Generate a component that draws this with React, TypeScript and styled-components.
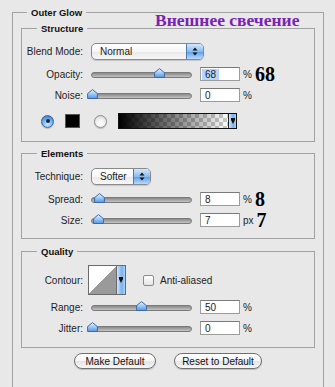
import React from 'react'
import styled, { createGlobalStyle } from 'styled-components'

const colors = {
  panel: '#e8e8e8',
  line: '#a2a2a2',
  text: '#1d1d1d',
  aquaTop: '#d3e8fd',
  aquaMid: '#8abcf0',
  aquaLow: '#5d9be4',
  aquaEdge: '#4f78ad'
};

const GlobalStyle = createGlobalStyle`
  html, body {
    margin: 0;
    padding: 0;
    background: ${colors.panel};
  }
  body {
    font-family: 'Liberation Sans', Arial, sans-serif;
    font-size: 10px;
    color: ${colors.text};
  }
  #root {
    width: 335px;
    height: 387px;
    overflow: hidden;
  }
`;

const Panel = styled.div`
  position: relative;
  padding: 12px 0 0 12px;
`;

const Group = styled.section<{ $outer?: boolean; $gap?: number }>`
  box-sizing: border-box;
  width: ${p => (p.$outer ? '312px' : 'auto')};
  height: ${p => (p.$outer ? '400px' : 'auto')};
  margin-top: ${p => p.$gap ?? 0}px;
  padding: ${p => (p.$outer ? '0 8px' : '0')};
  border: 1px solid ${colors.line};
  border-bottom: ${p => (p.$outer ? 'none' : `1px solid ${colors.line}`)};
`;

/* the caption sits on the box's top line, like a legend */
const Title = styled.div<{ $outer?: boolean }>`
  width: fit-content;
  margin: -7px 0 0 ${p => (p.$outer ? 6 : 15)}px;
  padding: 0 4px;
  height: 13px;
  line-height: 13px;
  font-weight: bold;
  font-size: 9.5px;
  color: #111;
  background: ${colors.panel};
`;

const Body = styled.div<{ $top: number; $bottom: number }>`
  display: flex;
  flex-direction: column;
  padding: ${p => p.$top}px 0 ${p => p.$bottom}px;
`;

const Row = styled.div<{ $h: number; $gap?: number }>`
  display: flex;
  align-items: center;
  height: ${p => p.$h}px;
  margin-top: ${p => p.$gap ?? 0}px;
`;

const Label = styled.span`
  flex-shrink: 0;
  width: 61px;
  text-align: right;
  white-space: nowrap;
`;

const Annotation = styled.span`
  position: absolute;
  left: 155px;
  top: 12px;
  font-family: 'Liberation Serif', 'Times New Roman', serif;
  font-weight: bold;
  font-size: 17.5px;
  line-height: 17px;
  color: #7a22b3;
`;

const BigValue = styled.span`
  margin-left: 3px;
  font-family: 'Liberation Serif', 'Times New Roman', serif;
  font-weight: bold;
  font-size: 20px;
  line-height: 14px;
  color: #000;
`;

/* popup menu */
const Select = styled.div<{ $w: number }>`
  box-sizing: border-box;
  display: flex;
  margin-left: 8px;
  width: ${p => p.$w}px;
  height: 17px;
  border: 1px solid #8a8a8a;
  border-radius: 5px;
  overflow: hidden;
  background: linear-gradient(#ffffff, #f6f6f6 50%, #e9e9e9 51%, #f7f7f7);
  box-shadow: 0 1px 1px rgba(0, 0, 0, 0.15);
`;

const SelectText = styled.span`
  flex: 1;
  padding-left: 8px;
  line-height: 15px;
`;

const SelectArrows = styled.span`
  display: flex;
  align-items: center;
  justify-content: center;
  width: 16px;
  border-left: 1px solid ${colors.aquaEdge};
  background: linear-gradient(${colors.aquaTop}, ${colors.aquaMid} 50%, ${colors.aquaLow} 51%, #b5dbff);
`;

/* slider */
const SliderBox = styled.div`
  display: flex;
  align-items: center;
  margin-left: 3px;
  width: 111px;
  height: 14px;
`;

const Track = styled.div`
  position: relative;
  flex: 1;
  margin: 2px 5px 0;
  height: 4px;
  border: 1px solid #7a7a7a;
  border-radius: 3px;
  background: linear-gradient(#8a8a8a, #a6a6a6 50%, #c4c4c4);
`;

const Thumb = styled.svg`
  position: absolute;
  bottom: -1px;
  width: 11px;
  height: 10px;
  margin-left: -5.5px;
`;

/* numeric field */
const Field = styled.div`
  box-sizing: border-box;
  margin-left: 3px;
  width: 40px;
  height: 14px;
  padding: 1px 1px 0;
  border: 1px solid #9c9c9c;
  border-top-color: #7a7a7a;
  background: #fff;
  line-height: 11px;
`;

const FieldValue = styled.span<{ $selected?: boolean }>`
  display: inline-block;
  padding: 0 3px;
  background: ${p => (p.$selected ? '#b5d5fd' : 'transparent')};
`;

const Unit = styled.span`
  margin-left: 3px;
`;

/* color row */
const Radio = styled.span<{ $on?: boolean; $gap: number }>`
  box-sizing: border-box;
  display: flex;
  align-items: center;
  justify-content: center;
  margin-left: ${p => p.$gap}px;
  width: 13px;
  height: 13px;
  border-radius: 50%;
  border: 1px solid ${p => (p.$on ? '#40679c' : '#8c8c8c')};
  background: ${p =>
    p.$on
      ? 'radial-gradient(circle at 50% 75%, #c9ebff, #7cb7f0 45%, #3f82d6 80%)'
      : 'radial-gradient(circle at 50% 70%, #ffffff, #f0f0f0 50%, #c9c9c9)'};
  box-shadow: 0 1px 1px rgba(0, 0, 0, 0.2);

  &::after {
    content: '';
    display: ${p => (p.$on ? 'block' : 'none')};
    width: 4px;
    height: 4px;
    border-radius: 50%;
    background: #1a2740;
  }
`;

const Swatch = styled.span`
  box-sizing: border-box;
  margin-left: 11px;
  width: 15px;
  height: 14px;
  background: #000;
  border: 1px solid #555;
`;

const GradientPicker = styled.div`
  box-sizing: border-box;
  display: flex;
  margin-left: 11px;
  width: 119px;
  height: 16px;
  border: 1px solid #111;
`;

const GradientFill = styled.div`
  flex: 1;
  background:
    linear-gradient(to right, #000, rgba(0, 0, 0, 0)),
    repeating-conic-gradient(#c9c9c9 0 25%, #ffffff 0 50%) 0 0 / 8px 8px;
`;

const DropArrow = styled.span`
  display: flex;
  align-items: center;
  justify-content: center;
  width: 7px;
  border-left: 1px solid #222;
  background: linear-gradient(to right, #cfe6fd, #79b1ee 60%, #a9d3fb);
`;

/* contour */
const Contour = styled.div`
  box-sizing: border-box;
  display: flex;
  margin-left: 5px;
  width: 38px;
  height: 30px;
  border: 1px solid #6a6a6a;
`;

const ContourCurve = styled.div`
  flex: 1;
  background: linear-gradient(to bottom right, #ffffff 50%, #9a9a9a 50%);
`;

const ContourArrow = styled(DropArrow)`
  width: 8px;
  border-left-color: #6a6a6a;
`;

const Checkbox = styled.span`
  box-sizing: border-box;
  margin-left: 17px;
  width: 11px;
  height: 11px;
  border: 1px solid #8a8a8a;
  border-radius: 2px;
  background: linear-gradient(#ffffff, #e4e4e4);
`;

const CheckLabel = styled.span`
  margin-left: 6px;
`;

/* bottom buttons */
const Buttons = styled.div`
  display: flex;
  justify-content: center;
  gap: 18px;
  margin-top: 5px;
`;

const Button = styled.button<{ $w: number }>`
  box-sizing: border-box;
  width: ${p => p.$w}px;
  height: 16px;
  padding: 0;
  border: 1px solid #707070;
  border-radius: 8px;
  background: linear-gradient(#ffffff, #f5f5f5 50%, #e4e4e4 51%, #f6f6f6);
  box-shadow: 0 1px 1px rgba(0, 0, 0, 0.18);
  font: inherit;
  color: #111;
`;

const UpDown = () => (
  <svg width="6" height="9" viewBox="0 0 6 9">
    <path d="M3 0.5 L5.5 3.5 H0.5 Z M3 8.5 L5.5 5.5 H0.5 Z" fill="#111" />
  </svg>
);

const Down = () => (
  <svg width="4" height="6" viewBox="0 0 4 6">
    <path d="M0 0 H4 V2 L2 6 L0 2 Z" fill="#111" />
  </svg>
);

const Slider: React.FC<{ value: number }> = ({ value }) => (
  <SliderBox>
    <Track>
      <Thumb viewBox="0 0 11 10" style={{ left: `${value}%` }}>
        <defs>
          <linearGradient id="thumbFill" x1="0" y1="0" x2="0" y2="1">
            <stop offset="0" stopColor="#eef7ff" />
            <stop offset="0.5" stopColor="#9cc8f4" />
            <stop offset="1" stopColor="#5597e2" />
          </linearGradient>
        </defs>
        <path d="M5.5 0.6 L10.4 4.6 V9.5 H0.6 V4.6 Z" fill="url(#thumbFill)" stroke="#3d6aa6" strokeWidth="1" />
      </Thumb>
    </Track>
  </SliderBox>
);

interface ISliderRowProps {
  label: string
  value: number
  unit: string
  gap: number
  note?: string
  selected?: boolean
}

const SliderRow: React.FC<ISliderRowProps> = ({ label, value, unit, gap, note, selected }) => (
  <Row $h={14} $gap={gap}>
    <Label>{label}</Label>
    <Slider value={value} />
    <Field>
      <FieldValue $selected={selected}>{value}</FieldValue>
    </Field>
    <Unit>{unit}</Unit>
    {note && <BigValue>{note}</BigValue>}
  </Row>
);

const App: React.FC = () => (
  <>
    <GlobalStyle />
    <Panel>
      <Annotation>Внешнее свечение</Annotation>
      <Group $outer>
        <Title $outer>Outer Glow</Title>

        <Group $gap={9}>
          <Title>Structure</Title>
          <Body $top={8} $bottom={12}>
            <Row $h={17}>
              <Label>Blend Mode:</Label>
              <Select $w={113}>
                <SelectText>Normal</SelectText>
                <SelectArrows><UpDown /></SelectArrows>
              </Select>
            </Row>
            <SliderRow label="Opacity:" value={68} unit="%" gap={7} note="68" selected />
            <SliderRow label="Noise:" value={0} unit="%" gap={7} />
            <Row $h={16} $gap={11}>
              <Radio $on $gap={19} />
              <Swatch />
              <Radio $gap={14} />
              <GradientPicker>
                <GradientFill />
                <DropArrow><Down /></DropArrow>
              </GradientPicker>
            </Row>
          </Body>
        </Group>

        <Group $gap={11}>
          <Title>Elements</Title>
          <Body $top={8} $bottom={11}>
            <Row $h={17}>
              <Label>Technique:</Label>
              <Select $w={60}>
                <SelectText>Softer</SelectText>
                <SelectArrows><UpDown /></SelectArrows>
              </Select>
            </Row>
            <SliderRow label="Spread:" value={8} unit="%" gap={7} note="8" />
            <SliderRow label="Size:" value={7} unit="px" gap={7} note="7" />
          </Body>
        </Group>

        <Group $gap={12}>
          <Title>Quality</Title>
          <Body $top={7} $bottom={12}>
            <Row $h={30}>
              <Label>Contour:</Label>
              <Contour>
                <ContourCurve />
                <ContourArrow><Down /></ContourArrow>
              </Contour>
              <Checkbox />
              <CheckLabel>Anti-aliased</CheckLabel>
            </Row>
            <SliderRow label="Range:" value={50} unit="%" gap={5} />
            <SliderRow label="Jitter:" value={0} unit="%" gap={7} />
          </Body>
        </Group>

        <Buttons>
          <Button $w={82}>Make Default</Button>
          <Button $w={88}>Reset to Default</Button>
        </Buttons>
      </Group>
    </Panel>
  </>
);

export default App
